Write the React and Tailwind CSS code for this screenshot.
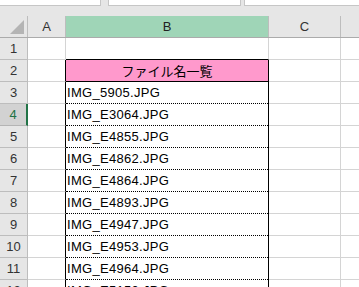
const names = [
  "IMG_5905.JPG",
  "IMG_E3064.JPG",
  "IMG_E4855.JPG",
  "IMG_E4862.JPG",
  "IMG_E4864.JPG",
  "IMG_E4893.JPG",
  "IMG_E4947.JPG",
  "IMG_E4953.JPG",
  "IMG_E4964.JPG",
  "IMG_E5150.JPG",
];

const font = { fontFamily: '"Liberation Sans", "Noto Sans CJK JP", sans-serif' };

function Row({ n }) {
  const selected = n === 4;
  const isHead = n === 2;
  const inList = n >= 3;
  return (
    <div className="flex h-[22px] shrink-0">
      <div
        className={
          selected
            ? "w-[28px] shrink-0 bg-[#d2d2d2] border-b border-b-[#b4b4b4] border-r-2 border-r-[#217346] flex items-center justify-center text-[13px] text-[#217346]"
            : "w-[28px] shrink-0 bg-[#e6e6e6] border-b border-b-[#bdbdbd] border-r border-r-[#bdbdbd] flex items-center justify-center text-[13px] text-[#333]"
        }
      >
        {n}
      </div>
      <div
        className={
          n >= 2
            ? "w-[38px] shrink-0 border-b border-b-[#d4d4d4] border-r border-r-black"
            : "w-[38px] shrink-0 border-b border-b-[#d4d4d4] border-r border-r-[#d4d4d4]"
        }
      />
      {n === 1 && (
        <div className="w-[203px] shrink-0 border-b border-b-black border-r border-r-[#d4d4d4]" />
      )}
      {isHead && (
        <div
          className="w-[203px] shrink-0 bg-[#ff99cc] border-b border-b-black border-r border-r-black flex items-center justify-center text-[13px] text-black"
          style={{ fontFamily: '"Noto Sans CJK JP", sans-serif' }}
        >
          ファイル名一覧
        </div>
      )}
      {inList && (
        <div className="w-[203px] shrink-0 border-r border-r-black flex">
          <div className="flex-1 border-b border-dotted border-b-black flex items-center pl-[1px] text-[13px] tracking-[0.3px] text-black">
            {names[n - 3]}
          </div>
        </div>
      )}
      <div className="w-[72px] shrink-0 border-b border-b-[#d4d4d4] border-r border-r-[#d4d4d4]" />
      <div className="flex-1 border-b border-b-[#d4d4d4]" />
    </div>
  );
}

export default function App() {
  const rows = [1, 2, 3, 4, 5, 6, 7, 8, 9, 10, 11, 12];
  return (
    <div className="w-[359px] h-[287px] overflow-hidden bg-white flex flex-col" style={font}>
      <div className="h-[16px] shrink-0 bg-[#e6e6e6] flex items-start">
        <div className="w-[101px] h-[6px] bg-white border-b border-r border-[#c6c6c6]" />
        <div className="ml-[7px] w-[133px] h-[6px] bg-white border-b border-r border-l border-[#c6c6c6]" />
        <div className="ml-[3px] flex-1 h-[6px] bg-white border-b border-l border-[#c6c6c6]" />
      </div>
      <div className="flex h-[22px] shrink-0 bg-[#e6e6e6] border-b border-b-[#ababab]">
        <div className="w-[28px] shrink-0 border-r border-r-[#bdbdbd] relative">
          <svg width="28" height="21" className="absolute left-0 top-0">
            <polygon points="24,4 24,18 10,18" fill="#b4b4b4" />
          </svg>
        </div>
        <div className="w-[38px] shrink-0 border-r border-r-[#bdbdbd] flex items-center justify-center text-[13px] text-[#333]">
          A
        </div>
        <div className="w-[203px] shrink-0 bg-[#9fd5b7] border-r border-r-[#bdbdbd] flex items-center justify-center text-[13px] text-[#222]">
          B
        </div>
        <div className="w-[72px] shrink-0 border-r border-r-[#bdbdbd] flex items-center justify-center text-[13px] text-[#333]">
          C
        </div>
        <div className="flex-1" />
      </div>
      {rows.map((n) => (
        <Row key={n} n={n} />
      ))}
    </div>
  );
}
